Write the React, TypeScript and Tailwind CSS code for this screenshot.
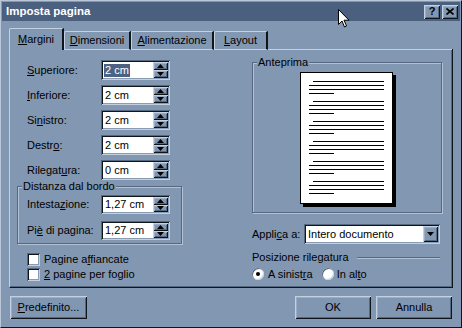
import React from "react";

const raised =
  "shadow-[inset_1px_1px_0_#c3d0e0,inset_-1px_-1px_0_#10141b,inset_2px_2px_0_#9badc4,inset_-2px_-2px_0_#566780]";
const sunken =
  "shadow-[inset_1px_1px_0_#566780,inset_-1px_-1px_0_#c3d0e0,inset_2px_2px_0_#10141b,inset_-2px_-2px_0_#8a9cb4]";
const etched = "border border-[#56677f] shadow-[inset_1px_1px_0_#b3c2d4,1px_1px_0_#b3c2d4]";

function U({ children }: { children: React.ReactNode }) {
  return <span className="underline underline-offset-[1px]">{children}</span>;
}

function Spin({ value, selected, h = "h-[20px]" }: { value: string; selected?: boolean; h?: string }) {
  return (
    <div className={`w-[69px] ${h} bg-white ${sunken} flex items-stretch p-[2px]`}>
      <div className="flex-1 flex items-center pl-[1px]">
        {selected ? <span className="bg-[#4d6182] text-white px-[1px] py-[1px]">{value}</span> : <span className="px-[1px]">{value}</span>}
      </div>
      <div className="w-[15px] flex flex-col">
        {[0, 1].map((i) => (
          <div key={i} className={`flex-1 bg-[#8196b0] ${raised} flex items-center justify-center`}>
            <svg width="7" height="4" viewBox="0 0 7 4">
              {i === 0 ? <path d="M3.5 0 L7 4 L0 4 Z" fill="#000" /> : <path d="M0 0 L7 0 L3.5 4 Z" fill="#000" />}
            </svg>
          </div>
        ))}
      </div>
    </div>
  );
}

function Row({ label, value, selected }: { label: React.ReactNode; value: string; selected?: boolean }) {
  return (
    <div className="flex items-center h-[20px]">
      <div className="w-[84px] pl-[10px]">{label}</div>
      <Spin value={value} selected={selected} />
    </div>
  );
}

function Btn({ children, w }: { children: React.ReactNode; w: string }) {
  return (
    <div className={`${w} h-[23px] ${raised} bg-[#8196b0] flex items-center justify-center`}>{children}</div>
  );
}

function Page() {
  const groups = [0, 1, 2, 3, 4, 5];
  return (
    <svg width="96" height="135" viewBox="0 0 96 135">
      <rect x="3" y="3" width="93" height="132" fill="#000" />
      <rect x="0.5" y="0.5" width="92" height="131" fill="#fff" stroke="#000" />
      {groups.map((g) => {
        const y = 9.5 + g * 20;
        return (
          <g key={g} stroke="#000" strokeWidth="1">
            <line x1="13" y1={y} x2="84" y2={y} />
            <line x1="9" y1={y + 4} x2="84" y2={y + 4} />
            <line x1="9" y1={y + 8} x2="84" y2={y + 8} />
            <line x1="9" y1={y + 12} x2="34" y2={y + 12} />
          </g>
        );
      })}
    </svg>
  );
}

export default function App() {
  return (
    <div className="relative w-[462px] h-[328px] bg-[#8297b1] border border-[#b9c7d8] border-r-[#10141b] border-b-[#10141b] font-['Liberation_Sans',Arial,sans-serif] text-[11px] text-black leading-none overflow-hidden select-none">
      {/* title bar */}
      <div className="mx-[1px] mt-[1px] h-[19px] bg-[#4b5f7f] flex items-center pl-[4px] pr-[2px]">
        <span className="text-white font-bold text-[11.5px]">Imposta pagina</span>
        <div className="ml-auto flex gap-[2px]">
          <div className={`w-[16px] h-[14px] bg-[#8297b1] ${raised} flex items-center justify-center font-bold text-[11px]`}>?</div>
          <div className={`w-[16px] h-[14px] bg-[#8297b1] ${raised} flex items-center justify-center`}>
            <svg width="8" height="7" viewBox="0 0 8 7">
              <path d="M0.5 0.5 L7.5 6.5 M7.5 0.5 L0.5 6.5" stroke="#000" strokeWidth="1.6" />
            </svg>
          </div>
        </div>
      </div>

      {/* tabs */}
      <div className="ml-[8px] mt-[7px] flex items-end h-[22px] relative z-10">
        <div className="h-[22px] w-[55px] bg-[#8297b1] border-l border-t border-[#c3d0e0] rounded-tl-[2px] border-r-2 border-r-[#10141b] flex items-center justify-center pb-[1px]">
          <span><U>M</U>argini</span>
        </div>
        {[
          ["D", "imensioni", "w-[67px]"],
          ["A", "limentazione", "w-[83px]"],
          ["L", "ayout", "w-[54px]"],
        ].map(([k, r, w]) => (
          <div key={k} className={`h-[19px] ${w} border-l border-t border-[#c3d0e0] rounded-tl-[2px] border-r-2 border-r-[#10141b] flex items-center justify-center border-b border-b-[#c3d0e0]`}>
            <span>
              <U>{k}</U>
              {r}
            </span>
          </div>
        ))}
        <div className="flex-1 border-b border-[#c3d0e0] mr-[9px]" />
      </div>

      {/* panel */}
      <div className="ml-[8px] w-[444px] h-[239px] border-l border-[#c3d0e0] border-r border-r-[#10141b] border-b border-b-[#10141b] shadow-[inset_-1px_-1px_0_#566780] flex -mt-[1px]">
        {/* left column */}
        <div className="w-[165px] ml-[7px] pt-[11px] flex flex-col">
          <div className="flex flex-col gap-[5px]">
            <Row label={<><U>S</U>uperiore:</>} value="2 cm" selected />
            <Row label={<><U>I</U>nferiore:</>} value="2 cm" />
            <Row label={<>Si<U>n</U>istro:</>} value="2 cm" />
            <Row label={<>Destr<U>o</U>:</>} value="2 cm" />
            <Row label={<>Rilegat<U>u</U>ra:</>} value="0 cm" />
          </div>
          <div className={`relative mt-[6px] h-[58px] ${etched} pt-[8px] flex flex-col gap-[7px]`}>
            <span className="absolute -top-[6px] left-[4px] bg-[#8297b1] px-[1px]">Distanza dal bordo</span>
            <div className="flex items-center">
              <div className="w-[83px] pl-[9px]">Intesta<U>z</U>ione:</div>
              <Spin value="1,27 cm" h="h-[19px]" />
            </div>
            <div className="flex items-center">
              <div className="w-[83px] pl-[9px]">Pi<U>è</U> di pagina:</div>
              <Spin value="1,27 cm" h="h-[19px]" />
            </div>
          </div>
          <div className="mt-[9px] ml-[10px] flex flex-col gap-[2px]">
            <div className="flex items-center gap-[4px]">
              <div className={`w-[13px] h-[13px] bg-white ${sunken}`} />
              <span>Pagine a<U>f</U>fiancate</span>
            </div>
            <div className="flex items-center gap-[4px]">
              <div className={`w-[13px] h-[13px] bg-white ${sunken}`} />
              <span><U>2</U> pagine per foglio</span>
            </div>
          </div>
        </div>

        {/* right column */}
        <div className="ml-[70px] w-[190px] pt-[13px] flex flex-col">
          <div className={`relative h-[151px] ${etched} flex justify-center pt-[9px] pl-[1px]`}>
            <span className="absolute -top-[6px] left-[4px] bg-[#8297b1] px-[1px]">Anteprima</span>
            <Page />
          </div>
          <div className="mt-[11px] flex items-center h-[20px]">
            <span className="w-[52px]">Appli<U>c</U>a a:</span>
            <div className={`w-[136px] h-[20px] bg-white ${sunken} flex items-center p-[2px]`}>
              <span className="flex-1 pl-[2px]">Intero documento</span>
              <div className={`w-[15px] h-full bg-[#8297b1] ${raised} flex items-center justify-center`}>
                <svg width="7" height="4" viewBox="0 0 7 4">
                  <path d="M0 0 L7 0 L3.5 4 Z" fill="#000" />
                </svg>
              </div>
            </div>
          </div>
          <div className="mt-[8px] flex items-center gap-[8px]">
            <span>Posizione rilegatura</span>
            <div className="flex-1 h-[2px] border-t border-[#56677f] border-b border-b-[#b3c2d4] mr-[2px]" />
          </div>
          <div className="mt-[4px] flex items-center h-[14px]">
            <div className="w-[12px] h-[12px] rounded-full bg-white shadow-[inset_1px_1px_0_#566780,inset_-1px_-1px_0_#c3d0e0] flex items-center justify-center">
              <div className="w-[4px] h-[4px] rounded-full bg-black" />
            </div>
            <span className="ml-[4px]">A sinist<U>r</U>a</span>
            <div className="ml-[9px] w-[12px] h-[12px] rounded-full bg-white shadow-[inset_1px_1px_0_#566780,inset_-1px_-1px_0_#c3d0e0]" />
            <span className="ml-[3px]">In al<U>t</U>o</span>
          </div>
        </div>
      </div>

      {/* buttons */}
      <div className="mt-[8px] ml-[9px] mr-[9px] flex">
        <Btn w="w-[77px]">
          <span><U>P</U>redefinito...</span>
        </Btn>
        <div className="flex-1" />
        <Btn w="w-[76px]">OK</Btn>
        <div className="w-[5px]" />
        <Btn w="w-[76px]">Annulla</Btn>
      </div>

      {/* mouse cursor */}
      <svg className="absolute left-[337px] top-[8px]" width="12" height="19" viewBox="0 0 12 19">
        <path d="M0.5 0.5 L0.5 15.5 L4 12 L6.5 18 L8.5 17 L6 11.2 L11 11.2 Z" fill="#fff" stroke="#000" strokeWidth="1" strokeLinejoin="round" />
      </svg>
    </div>
  );
}
